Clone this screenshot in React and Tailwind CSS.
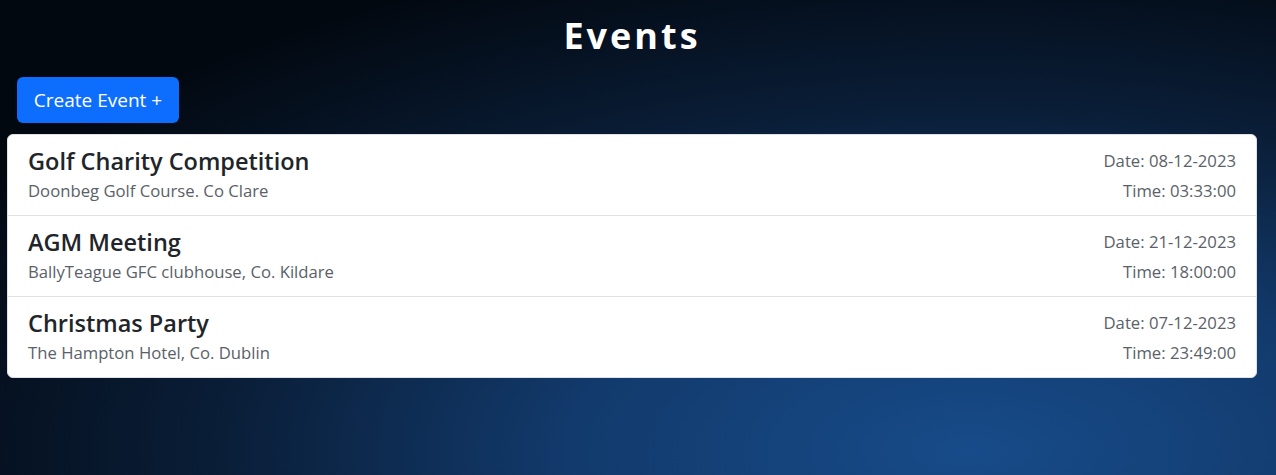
export default function App() {
  const events = [
    { title: "Golf Charity Competition", place: "Doonbeg Golf Course. Co Clare", date: "08-12-2023", time: "03:33:00" },
    { title: "AGM Meeting", place: "BallyTeague GFC clubhouse, Co. Kildare", date: "21-12-2023", time: "18:00:00" },
    { title: "Christmas Party", place: "The Hampton Hotel, Co. Dublin", date: "07-12-2023", time: "23:49:00" },
  ];
  return (
    <div
      className="w-[1276px] h-[475px] overflow-hidden bg-[radial-gradient(ellipse_90%_110%_at_76%_95%,#174b89_0%,#123a6c_35%,#0a1e38_65%,#020810_100%)] font-['Open_Sans',sans-serif]"
    >
      <h1 className="h-[71px] flex items-center justify-center pt-[1px] pr-[12px] text-[36px] font-bold tracking-[3px] text-white">
        Events
      </h1>
      <div className="pl-[17px] pt-[6px]">
        <button className="h-[46px] w-[162px] rounded-[6px] bg-[#0d6efd] text-white text-[19px]">
          Create Event +
        </button>
      </div>
      <div className="mx-[7px] mt-[11px] w-[1250px] bg-white rounded-[6px] border border-[#dee2e6]">
        {events.map((e, i) => (
          <div
            key={i}
            className={`flex justify-between px-[20px] pt-[11px] pb-[9px] ${i < 2 ? "border-b border-[#dee2e6]" : ""}`}
          >
            <div>
              <div className="text-[23.5px] leading-[30px] font-semibold text-[#212529]">{e.title}</div>
              <div className="text-[16.7px] leading-[30px] text-[#5b6168]">{e.place}</div>
            </div>
            <div className="text-right text-[16.7px] leading-[30px] text-[#5b6168]">
              <div>Date: {e.date}</div>
              <div>Time: {e.time}</div>
            </div>
          </div>
        ))}
      </div>
    </div>
  );
}
